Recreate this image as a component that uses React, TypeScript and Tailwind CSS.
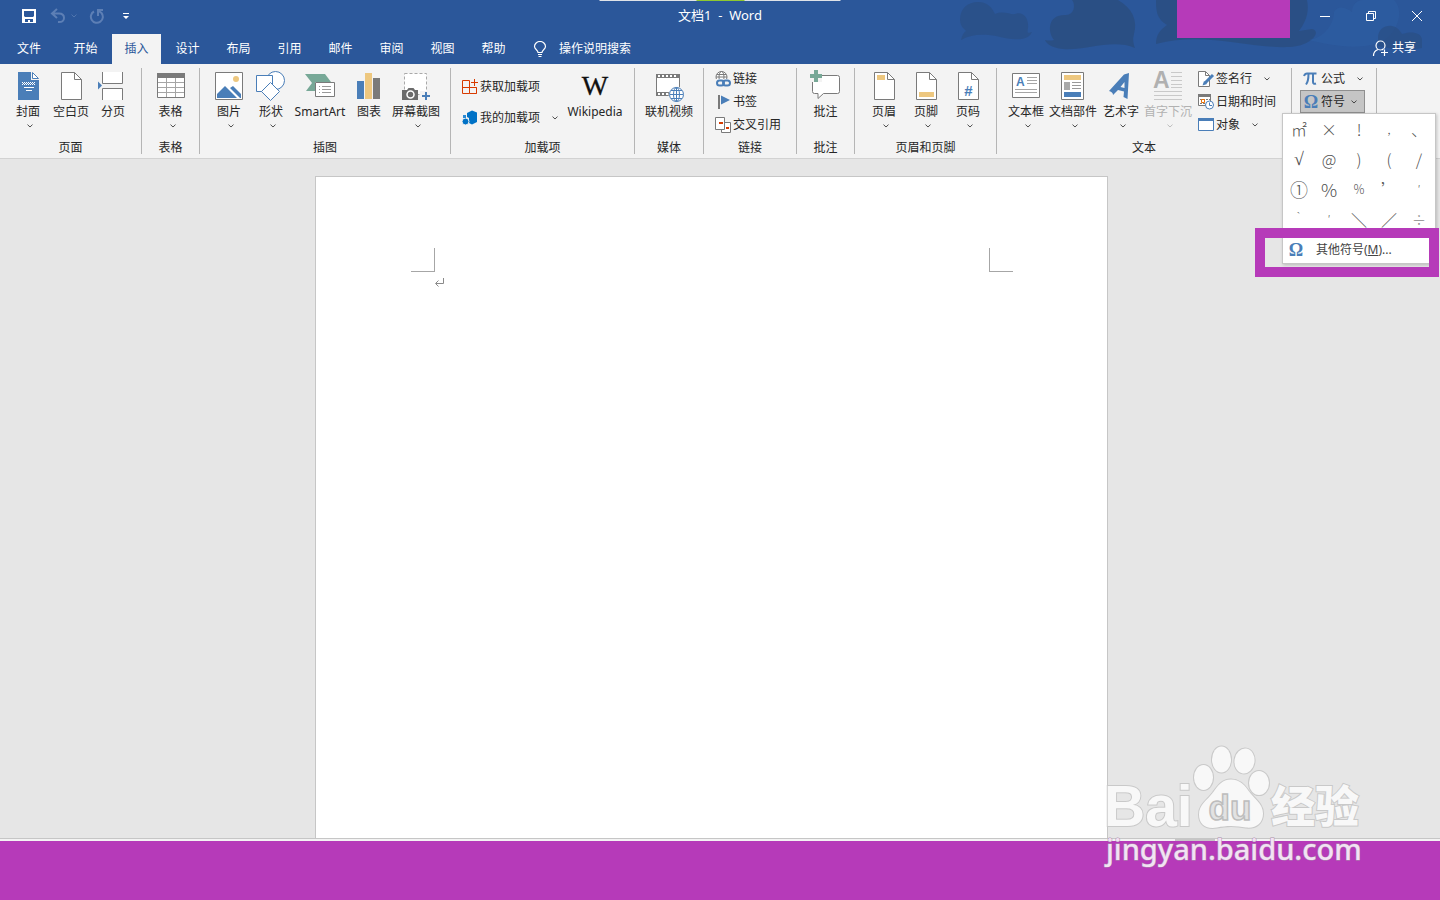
import type { ReactNode } from "react";

const BLUE = "#4a7eb8";
const GRAY = "#7a7a7a";
const SAND = "#edc77f";
const GREEN = "#77a897";

function Chevron({ className = "" }: { className?: string }) {
  return (
    <svg width="6" height="4" viewBox="0 0 6 4" fill="none" stroke="currentColor" strokeWidth="1" className={`opacity-80 ${className}`} aria-hidden="true">
      <path d="M.5 .6 3 3 5.500 .6" />
    </svg>
  );
}

function Big({ children }: { children: ReactNode }) {
  return (
    <svg width="32" height="32" viewBox="0 0 32 32" fill="none" className="shrink-0 overflow-visible" aria-hidden="true">
      {children}
    </svg>
  );
}

function Small({ children }: { children: ReactNode }) {
  return (
    <svg width="16" height="16" viewBox="0 0 16 16" fill="none" className="shrink-0 overflow-visible" aria-hidden="true">
      {children}
    </svg>
  );
}

function Sheet({ children }: { children?: ReactNode }) {
  return (
    <Big>
      <path d="M6.500 2.500h13l7 7v20h-20z" fill="#fff" stroke={GRAY} />
      <path d="M19.500 2.500v7h7" stroke={GRAY} />
      {children}
    </Big>
  );
}

const icons = {
  cover: (
    <Big>
      <path d="M6 2h13v8h8v20H6z" fill={BLUE} />
      <path d="M20.500 2.500v6h6z" fill="#fff" stroke={BLUE} />
      <path d="M10 12.500h13M10 14.500h13" stroke="#fff" strokeDasharray="1 1" />
      <path d="M10 13.500h13" stroke="#fff" strokeDasharray="1 1" strokeDashoffset="1" />
      <path d="M12 17.500h10M14 20.500h6" stroke="#fff" />
    </Big>
  ),
  blank: <Sheet />,
  pageBreak: (
    <Big>
      <path d="M6 2h20v11H6zM6 18h20v12H6z" fill="#fff" />
      <path d="M5.500 2v11.500h20V2M5.500 30V18.500h20V30" stroke={GRAY} />
      <path d="M1 11.500 5 15.500 1 19.500z" fill={BLUE} />
    </Big>
  ),
  table: (
    <Big>
      <path d="M2.500 3.500h27v24h-27z" fill="#fff" stroke={GRAY} />
      <path d="M2 3h28v5H2z" fill={GRAY} />
      <path d="M3 12.500h26M3 17.500h26M3 22.500h26M11.500 8v19M20.500 8v19" stroke="#a5a5a5" />
    </Big>
  ),
  picture: (
    <Big>
      <path d="M2.500 2.500h27v27h-27z" fill="#fff" stroke={GRAY} />
      <circle cx="23" cy="9" r="3" fill={SAND} />
      <path d="M4 28v-4l8-8 12 12z" fill={BLUE} />
      <path d="m17 18 3-2 8 8v4h-1z" fill={BLUE} />
    </Big>
  ),
  shapes: (
    <Big>
      <circle cx="20.500" cy="10.500" r="9" fill="#fff" stroke={BLUE} />
      <path d="M1.500 5.500h16v16h-16z" fill="#fff" stroke={BLUE} />
      <path d="m15.500 12.500 9 9-9 9-9-9z" fill="#fff" stroke={BLUE} />
    </Big>
  ),
  smartart: (
    <Big>
      <path d="M1 4h20l6 8H11v9H2l6-8z" fill={GREEN} />
      <path d="M11.500 12.500h19v14h-19z" fill="#fff" stroke={GRAY} />
      <path d="M15 16.500h1M15 19.500h1M15 22.500h1M18 16.500h9M18 19.500h9M18 22.500h9" stroke="#999" />
    </Big>
  ),
  chart: (
    <Big>
      <path d="M4 11h7v18H4z" fill={BLUE} />
      <path d="M12 3h7v26h-7z" fill={SAND} />
      <path d="M20 8h7v21h-7z" fill={GRAY} />
    </Big>
  ),
  screenshot: (
    <Big>
      <path d="M4.500 3.500h22v21h-22z" fill="#fff" stroke="#a9a9a9" strokeDasharray="3 2" />
      <path d="M2 20h5l1.500-2h5l1.500 2h3v10H2z" fill="#6b6b6b" />
      <circle cx="10.500" cy="24.500" r="3.500" stroke="#fff" strokeWidth="1.500" />
      <path d="M20 21h12v11H20z" fill="#f3f3f3" />
      <path d="M26 22v8M22 26h8" stroke={BLUE} strokeWidth="2" />
    </Big>
  ),
  wiki: (
    <Big>
      <text x="16" y="25" textAnchor="middle" fontFamily="Liberation Serif, serif" fontSize="28" fill="#111" stroke="#111" strokeWidth=".3">W</text>
    </Big>
  ),
  video: (
    <Big>
      <path d="M3.500 4.500h23v21h-23z" fill="#fff" stroke={GRAY} />
      <path d="M3 6h24M3 24h24" stroke={GRAY} strokeWidth="4" />
      <path d="M5 6h20M5 24h20" stroke="#fff" strokeWidth="2" strokeDasharray="2 2" />
      <circle cx="23.500" cy="24.500" r="8" fill="#f3f3f3" />
      <circle cx="23.500" cy="24.500" r="7" fill="#fff" stroke={BLUE} />
      <ellipse cx="23.500" cy="24.500" rx="3" ry="7" stroke={BLUE} />
      <path d="M17 24.500h13M18 20.500h11M18 28.500h11M23.500 18v13" stroke={BLUE} />
    </Big>
  ),
  comment: (
    <Big>
      <path d="M4.500 5.500h23q2 0 2 2v14q0 2-2 2h-14l-5.500 5v-5H4.500q-2 0-2-2v-14q0-2 2-2z" fill="#fff" stroke={GRAY} />
      <path d="M0 0h12v12H0z" fill="#f3f3f3" />
      <path d="M6 0v12M0 6h12" stroke={GREEN} strokeWidth="4" />
    </Big>
  ),
  header: <Sheet><path d="M9 5h8v5H9z" fill={SAND} /></Sheet>,
  footer: <Sheet><path d="M9 22h15v5H9z" fill={SAND} /></Sheet>,
  pageNumber: (
    <Sheet>
      <text x="16.500" y="26" textAnchor="middle" fontFamily="Liberation Sans, sans-serif" fontSize="15" fontWeight="bold" fill={BLUE}>#</text>
    </Sheet>
  ),
  textBox: (
    <Big>
      <path d="M2.500 3.500h27v24h-27z" fill="#fff" stroke={GRAY} />
      <text x="6" y="16" fontFamily="Liberation Sans, sans-serif" fontSize="12" fontWeight="bold" fill={BLUE}>A</text>
      <path d="M17 7.500h10M17 10.500h10M17 13.500h10M5 19.500h22M5 22.500h22" stroke="#a5a5a5" />
    </Big>
  ),
  parts: (
    <Big>
      <path d="M4.500 2.500h22v27h-22z" fill="#fff" stroke={GRAY} />
      <path d="M7 5h17v5H7z" fill={SAND} />
      <path d="M7 12h6v8H7z" fill="#a9a9a9" />
      <path d="M15 12.500h9M15 15.500h9M15 18.500h9" stroke="#999" />
      <path d="M7 22h17v5H7z" fill={BLUE} />
    </Big>
  ),
  wordArt: (
    <Big>
      <path d="M4 21c3 1 4 2 4 4l5-5 6 1.500-.5 5.500 4 2 1.500-26-5 1.500zM15.500 17l4-5v6z" fill={BLUE} fillRule="evenodd" />
    </Big>
  ),
  dropCap: (
    <Big>
      <text x="1" y="18" fontFamily="Liberation Sans, sans-serif" fontSize="23" fontWeight="bold" fill="#b0b0b0">A</text>
      <path d="M19 2.500h11M19 6.500h11M19 10.500h11M19 14.500h11M19 17.500h11M2 21.500h28M2 25.500h28M2 29.500h28" stroke="#c9c9c9" />
    </Big>
  ),
  getAddins: (
    <Small>
      <path d="M.5 1.500h7v13h-7zM.5 8.500h14v6h-7M14.500 8.500v6" stroke="#d83b01" />
      <path d="M12.500 0v7M9 3.500h7" stroke="#d83b01" />
    </Small>
  ),
  myAddins: (
    <Small>
      <path d="m5 3 5-2.500 5 2v9.500l-5 2.500-3-1.500V8L5 7z" fill="#0072c6" />
      <circle cx="3.500" cy="11.500" r="3.500" fill="#0072c6" stroke="#f3f3f3" />
      <path d="M1 5h3v3H1z" fill="#2a8ad4" />
    </Small>
  ),
  link: (
    <Small>
      <circle cx="6.500" cy="6" r="5.500" fill="#fff" stroke={GRAY} />
      <ellipse cx="6.500" cy="6" rx="2.500" ry="5.500" stroke={GRAY} />
      <path d="M1 6h11M2 3.500h9" stroke={GRAY} />
      <path d="M0 8h16v8H0z" fill="#f3f3f3" />
      <rect x="2" y="9.500" width="7" height="5" rx="2.500" stroke={BLUE} strokeWidth="2" />
      <rect x="8" y="9.500" width="7" height="5" rx="2.500" stroke={BLUE} strokeWidth="2" />
    </Small>
  ),
  bookmark: (
    <Small>
      <path d="M4 1v14" stroke={GRAY} strokeWidth="2" />
      <path d="M6 1.500 15 6l-9 4.500z" fill={BLUE} />
    </Small>
  ),
  crossRef: (
    <Small>
      <path d="M7.500 5.500h8v10h-9v-5" fill="#fff" stroke={GRAY} />
      <path d="M.5 .5h9v12h-9z" fill="#fff" stroke={GRAY} />
      <path d="M10 10v3H7v2h7v-5z" fill="#fff" />
      <path d="M4 5h4v2H4zM11 10h3v2h-3z" fill="#d83b01" />
    </Small>
  ),
  signature: (
    <Small>
      <path d="M.5 .5h7l4 4v11h-11z" fill="#fff" stroke={GRAY} />
      <path d="M7.500 .5v4h4" stroke={GRAY} />
      <path d="m15 4-8 8" stroke={BLUE} strokeWidth="3" />
      <path d="m6 10-1.500 4.500L9 13z" fill={BLUE} />
    </Small>
  ),
  dateTime: (
    <Small>
      <path d="M.5 1.500h12v10H.5z" fill="#fff" stroke={GRAY} />
      <path d="M0 0h13v3H0z" fill={GRAY} />
      <path d="M2 5.500h10M2 9.500h6" stroke={GRAY} strokeDasharray="2 1" />
      <path d="M3.500 5.500h3v3h-3z" fill="#fff" stroke="#e8710a" />
      <circle cx="11.500" cy="11" r="4" fill="#fff" stroke={BLUE} />
      <path d="M11.500 8.500v3h2.500" stroke={BLUE} />
    </Small>
  ),
  object: (
    <Small>
      <path d="M.5 1.500h15v12H.5z" fill="#fff" stroke={BLUE} />
      <path d="M0 1h16v3H0z" fill={BLUE} />
    </Small>
  ),
  pi: (
    <Small>
      <path d="M1 5Q2 2.500 4 2.500h9.500M5.500 3c0 4-.5 8-2.500 10.500M10 3v8q0 2.500 3 1.500" stroke={BLUE} strokeWidth="2" />
    </Small>
  ),
  omega: (
    <Small>
      <text x="8" y="14" textAnchor="middle" fontFamily="Liberation Serif, serif" fontSize="18" fontWeight="bold" fill={BLUE}>Ω</text>
    </Small>
  ),
};

type ToolProps = { icon: ReactNode; label: string; width?: string; menu?: boolean; disabled?: boolean };

function Tool({ icon, label, width = "w-[42px]", menu = false, disabled = false }: ToolProps) {
  return (
    <button type="button" disabled={disabled} className={`flex shrink-0 flex-col items-center pt-1.5 ${width} ${disabled ? "text-[#b1b1b1]" : "text-[#262626]"}`}>
      {icon}
      <span className="mt-0.5 leading-4 whitespace-nowrap">{label}</span>
      {menu && <Chevron className="mt-1 ml-1" />}
    </button>
  );
}

function RowTool({ icon, label, menu = false, className = "h-[23px]" }: { icon: ReactNode; label: string; menu?: boolean; className?: string }) {
  return (
    <button type="button" className={`flex items-center gap-0.5 whitespace-nowrap ${className}`}>
      {icon}
      <span className="leading-4">{label}</span>
      {menu && <Chevron className="ml-2.5" />}
    </button>
  );
}

function Group({ label, width, children }: { label: string; width: string; children: ReactNode }) {
  return (
    <>
      <section aria-label={label} className={`flex shrink-0 flex-col ${width}`}>
        <div className="flex h-[75px] items-start">{children}</div>
        <div className="text-center leading-[18px]">{label}</div>
      </section>
      <div className="my-1 w-px shrink-0 bg-[#b5b5b5]" />
    </>
  );
}

const tabs = ["开始", "插入", "设计", "布局", "引用", "邮件", "审阅", "视图", "帮助"];

const symbols = ["㎡", "×", "!", ",", "、", "√", "@", ")", "(", "/", "①", "%", "％", "’", "′", "‵", "′", "＼", "／", "÷"];
const symbolStyles: Record<string, string> = {
  "√": "font-['Liberation_Serif'] text-lg",
  "①": "text-lg",
  "%": "text-lg",
  "％": "text-xs",
  "′": "text-xs",
  "‵": "text-xs",
  ",": "text-xs",
  "÷": "text-sm text-[#8a8a8a]",
};

function SymbolMenu() {
  return (
    <div className="absolute top-[23px] -left-[18px] z-10 w-[154px] border border-[#c6c6c6] bg-white shadow-[1px_1px_3px_rgba(0,0,0,0.2)]">
      <div className="grid h-[120px] grid-cols-5 px-px font-['Noto_Sans_CJK_SC',sans-serif] text-base font-light text-[#505050]">
        {symbols.map((s, i) => (
          <button type="button" key={i} className={`flex h-[29px] items-center justify-center ${symbolStyles[s] ?? ""}`}>
            {s}
          </button>
        ))}
      </div>
      <button type="button" className="flex h-[29px] w-full items-center gap-3 pt-0.5 pl-[5px] text-[#444]">
        {icons.omega}
        <span>
          其他符号(<u>M</u>)...
        </span>
      </button>
      <div className="pointer-events-none absolute -right-1 -bottom-3.5 h-[49px] w-[184px] border-10 border-[#b63ab9]" />
    </div>
  );
}

function HeaderArt() {
  return (
    <svg className="pointer-events-none absolute top-0 right-0" width="500" height="64" viewBox="0 0 500 64" fill="#2a4d80" aria-hidden="true">
      <path d="M20 20C20 8 28 2 38 2s14 6 17 12c8-4 16 1 20 0 8-3 14 4 13 14-1 6 0 5 4 4-4 10-22 8-36 4-14-2-24-2-35 4 1-5 3-8 5-9q-6-5-6-11z" opacity=".6" />
      <path d="M132 0h46c14 8 20 20 16 34q-2 7 1 14c-22-10-50 3-72 1-12-1-17-6-18-9q4 1 9 0c-7-9-6-26 12-25 8 0 10-10 6-15z" opacity=".85" />
      <path d="M216 0h151c3 14-3 24-8 31l13-2c10 2 0 17-22 18-40 2-84-16-134-3 0-9 4-14 11-19-11-6-11-16-11-25z" opacity=".8" />
      <path d="M394 12c3-6 10-6 18 0 0-6 4-12 11-12h31c10 10 5 30-10 40-20 12-55 5-75 0 15-2 25-16 25-28z" fill="#2d5ca1" opacity=".7" />
      <path d="M438 38c0-9 7-13 14-12 6 1 8 5 10 8 8-3 20-2 20 6v8q-20 4-44-2z" opacity=".6" />
    </svg>
  );
}

function Watermark() {
  const outline = { stroke: "#c9c9c9", strokeWidth: 2, paintOrder: "stroke" as const };
  return (
    <svg className="pointer-events-none absolute right-[70px] bottom-[30px]" width="270" height="130" viewBox="0 0 270 130" fill="#f8f8f8" aria-hidden="true">
      <text x="4" y="86" fontFamily="Liberation Sans, sans-serif" fontWeight="bold" fontSize="57" {...outline}>Bai</text>
      <g {...outline}>
        <ellipse cx="103.500" cy="37.500" rx="9.500" ry="12.500" />
        <ellipse cx="121.500" cy="19.500" rx="9.500" ry="13" />
        <ellipse cx="144.500" cy="21" rx="10" ry="12.500" transform="rotate(8 144.500 21)" />
        <ellipse cx="159" cy="43" rx="10" ry="12" />
        <path d="M131 39.500c9 0 14 6 18 12 5 7 14 12 14 22 0 10-7 15-17 14-10-2-20-2-29 0-12 2-18-4-18-13 0-10 8-14 14-22 5-7 9-13 18-13z" />
      </g>
      <text x="130" y="80" textAnchor="middle" fontFamily="Liberation Sans, sans-serif" fontWeight="bold" fontSize="35" fill="#e2e2e2" stroke="#bdbdbd" strokeWidth="1.500">du</text>
      <text x="171" y="83" fontFamily="Noto Sans CJK SC, sans-serif" fontWeight="900" fontSize="44" {...outline}>经验</text>
      <text x="6" y="120" fontFamily="Noto Sans, sans-serif" fontSize="29" fontWeight="500" fill="#f3e2f4" stroke="#a98fab" strokeWidth="1" paintOrder="stroke">jingyan.baidu.com</text>
    </svg>
  );
}

export default function App() {
  return (
    <div className="relative flex min-h-screen flex-col overflow-hidden bg-[#e6e6e6] font-['Noto_Sans','Noto_Sans_CJK_SC',sans-serif] text-xs text-[#262626]">
      <header className="relative bg-[#2b579a] text-white">
        <HeaderArt />
        <div className="absolute top-0 left-1/2 flex h-px w-[241px] -translate-x-1/2 justify-center bg-[#dfe3e8]">
          <div className="w-12 bg-[#8fc82f]" />
        </div>
        <div className="absolute top-0 right-[150px] h-[38px] w-[113px] bg-[#b63ab9]" />
        <div className="relative flex h-8 items-center">
          <div className="flex flex-1 items-center">
            <button type="button" aria-label="保存" className="ml-[21px]">
              <Small>
                <path d="M1 1h14v14H1z" fill="#fff" />
                <path d="M3 3h10v5l-1 1H4L3 8zM4 11h8v3H9v-2H7v2H4z" fill="#2b579a" />
              </Small>
            </button>
            <button type="button" aria-label="撤消" className="ml-3 flex items-center gap-1.5 text-[#5d7fb5]">
              <svg width="16" height="16" viewBox="0 0 16 16" fill="none" stroke="currentColor" strokeWidth="2" aria-hidden="true">
                <path d="M8 1 3 5.500 8 10M3 5.500h7q5 0 5 4.500t-6 4" />
              </svg>
              <Chevron />
            </button>
            <button type="button" aria-label="重复" className="ml-3 text-[#5d7fb5]">
              <svg width="16" height="16" viewBox="0 0 16 16" fill="none" stroke="currentColor" strokeWidth="2" aria-hidden="true">
                <path d="M5 3.500A6 6 0 1 0 12.500 5L10 3M14 2H9v6" />
              </svg>
            </button>
            <button type="button" aria-label="自定义快速访问工具栏" className="ml-4">
              <svg width="10" height="10" viewBox="0 0 10 10" aria-hidden="true">
                <path d="M2 2h6v1H2zM2 5h6L5 8z" fill="#fff" />
              </svg>
            </button>
          </div>
          <h1 className="text-[13px] whitespace-pre">文档1  -  Word</h1>
          <div className="flex flex-1 justify-end">
            <button type="button" aria-label="最小化" className="flex h-[30px] w-[46px] items-center justify-center">
              <svg width="10" height="10" stroke="#fff" aria-hidden="true"><path d="M0 5.500h10" /></svg>
            </button>
            <button type="button" aria-label="向下还原" className="flex h-[30px] w-[46px] items-center justify-center">
              <svg width="10" height="10" stroke="#fff" fill="none" aria-hidden="true"><path d="M.5 2.500h7v7h-7zM2.500 2.500v-2h7v7h-2" /></svg>
            </button>
            <button type="button" aria-label="关闭" className="flex h-[30px] w-[46px] items-center justify-center">
              <svg width="10" height="10" stroke="#fff" aria-hidden="true"><path d="M0 0 10 10M10 0 0 10" /></svg>
            </button>
          </div>
        </div>
        <nav className="relative flex h-8 items-end">
          <button type="button" className="mr-0.5 h-[30px] w-[58px]">文件</button>
          {tabs.map((t) => (
            <button
              type="button"
              key={t}
              className={`mx-px h-[30px] w-[49px] ${t === "插入" ? "bg-[#f3f3f3] text-[#2b579a]" : ""}`}
            >
              {t}
            </button>
          ))}
          <button type="button" className="ml-3.5 flex h-[30px] items-center gap-3">
            <svg width="14" height="16" viewBox="0 0 14 16" fill="none" stroke="#fff" strokeWidth="1.200" aria-hidden="true">
              <path d="M5 11.500C5 9 1.500 8.500 1.500 5.500a5.500 5 0 0 1 11 0C12.500 8.500 9 9 9 11.500zM5 13.500h4M5.500 15.500h3" />
            </svg>
            操作说明搜索
          </button>
          <button type="button" className="mr-6 ml-auto flex h-8 items-center gap-1">
            <svg width="16" height="16" viewBox="0 0 16 16" fill="none" stroke="#fff" strokeWidth="1.200" aria-hidden="true">
              <circle cx="8.500" cy="5.500" r="4.500" />
              <path d="M1.500 16q0-5 4.500-6.500M10 9l1 1M12.500 9.500v7M9 12.500h7" />
            </svg>
            共享
          </button>
        </nav>
      </header>

      <div className="flex h-[95px] border-b border-[#d2d2d2] bg-[#f3f3f3]">
        <Group label="页面" width="w-[141px]">
          <div className="flex pl-2.5">
            <Tool icon={icons.cover} label="封面" width="w-9" menu />
            <Tool icon={icons.blank} label="空白页" width="w-[50px]" />
            <Tool icon={icons.pageBreak} label="分页" width="w-[34px]" />
          </div>
        </Group>
        <Group label="表格" width="w-[57px]">
          <Tool icon={icons.table} label="表格" width="w-full" menu />
        </Group>
        <Group label="插图" width="w-[250px]">
          <div className="flex pl-2">
            <Tool icon={icons.picture} label="图片" menu />
            <Tool icon={icons.shapes} label="形状" menu />
            <Tool icon={icons.smartart} label="SmartArt" width="w-14" />
            <Tool icon={icons.chart} label="图表" />
            <Tool icon={icons.screenshot} label="屏幕截图" width="w-[52px]" menu />
          </div>
        </Group>
        <Group label="加载项" width="w-[183px]">
          <div className="flex flex-col items-start pt-[7px] pl-[11px]">
            <RowTool icon={icons.getAddins} label="获取加载项" className="h-[31px]" />
            <RowTool icon={icons.myAddins} label="我的加载项" className="h-[31px]" menu />
          </div>
          <Tool icon={icons.wiki} label="Wikipedia" width="w-[74px]" />
        </Group>
        <Group label="媒体" width="w-[68px]">
          <Tool icon={icons.video} label="联机视频" width="w-full" />
        </Group>
        <Group label="链接" width="w-[92px]">
          <div className="flex flex-col items-start pt-[3px] pl-[11px]">
            <RowTool icon={icons.link} label="链接" />
            <RowTool icon={icons.bookmark} label="书签" />
            <RowTool icon={icons.crossRef} label="交叉引用" />
          </div>
        </Group>
        <Group label="批注" width="w-[57px]">
          <Tool icon={icons.comment} label="批注" width="w-full" />
        </Group>
        <Group label="页眉和页脚" width="w-[141px]">
          <div className="flex pl-2">
            <Tool icon={icons.header} label="页眉" menu />
            <Tool icon={icons.footer} label="页脚" menu />
            <Tool icon={icons.pageNumber} label="页码" menu />
          </div>
        </Group>
        <Group label="文本" width="w-[294px]">
          <div className="flex pl-2">
            <Tool icon={icons.textBox} label="文本框" menu />
            <Tool icon={icons.parts} label="文档部件" width="w-[52px]" menu />
            <Tool icon={icons.wordArt} label="艺术字" width="w-11" menu />
            <Tool icon={icons.dropCap} label="首字下沉" width="w-[50px]" menu disabled />
          </div>
          <div className="flex flex-col items-start pt-[3px] pl-[5px]">
            <RowTool icon={icons.signature} label="签名行" menu />
            <RowTool icon={icons.dateTime} label="日期和时间" />
            <RowTool icon={icons.object} label="对象" menu />
          </div>
        </Group>
        <Group label="" width="w-[84px]">
          <div className="flex flex-col items-start pt-[3px] pl-2">
            <RowTool icon={icons.pi} label="公式" className="h-[23px] pl-[3px]" menu />
            <div className="relative">
              <button type="button" aria-expanded="true" className="flex h-[23px] w-[65px] items-center gap-0.5 border border-[#8f8f8f] bg-[#c5c5c5] pl-0.5">
                {icons.omega}
                <span className="leading-4">符号</span>
                <Chevron className="ml-1" />
              </button>
              <SymbolMenu />
            </div>
          </div>
        </Group>
      </div>

      <main className="flex flex-1 justify-center pt-[17px] pr-[17px]">
        <article className="w-[793px] border border-b-0 border-[#c6c6c6] bg-white pt-[71px] pr-[94px] pl-[95px]">
          <div className="flex justify-between">
            <div className="size-6 border-r border-b border-[#a6a6a6]" />
            <div className="size-6 border-b border-l border-[#a6a6a6]" />
          </div>
          <svg width="9" height="9" viewBox="0 0 9 9" fill="none" stroke="#8a8a8a" className="mt-1.5 ml-6" aria-hidden="true">
            <path d="M8.500 0v5.500H1M3.500 2.500l-3 3 3 3" />
          </svg>
        </article>
      </main>

      <footer className="h-[62px] border-t border-[#c6c6c6] bg-[#b63ab9]">
        <div className="flex h-0.5 justify-end bg-[#f3f3f3] pr-[225px]">
          <div className="w-10 bg-[#c6c6c6]" />
        </div>
      </footer>
      <Watermark />
    </div>
  );
}
